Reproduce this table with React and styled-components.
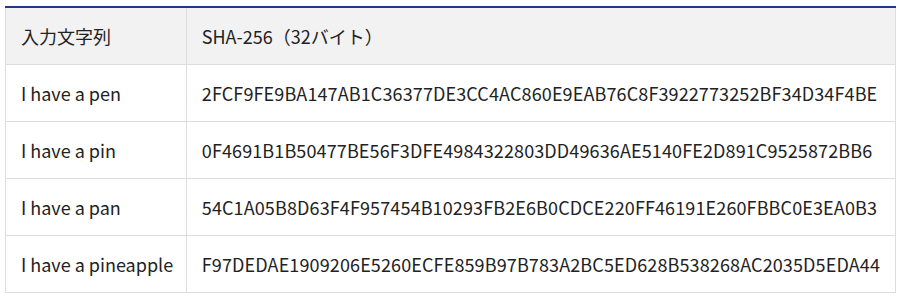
import styled, { createGlobalStyle } from "styled-components";

const GlobalStyle = createGlobalStyle`
  body {
    margin: 0;
    background: #ffffff;
    font-family: "Noto Sans CJK JP", "Noto Sans", sans-serif;
    color: #222222;
  }
`;

const rows = [
  ["I have a pen", "2FCF9FE9BA147AB1C36377DE3CC4AC860E9EAB76C8F3922773252BF34D34F4BE"],
  ["I have a pin", "0F4691B1B50477BE56F3DFE4984322803DD49636AE5140FE2D891C9525872BB6"],
  ["I have a pan", "54C1A05B8D63F4F957454B10293FB2E6B0CDCE220FF46191E260FBBC0E3EA0B3"],
  ["I have a pineapple", "F97DEDAE1909206E5260ECFE859B97B783A2BC5ED628B538268AC2035D5EDA44"],
];

const Wrapper = styled.div`
  padding: 6px 4px 0 5px;
`;

const Table = styled.table`
  width: 891px;
  border-collapse: collapse;
  border-top: 2px solid #1b3a8c;
  font-size: 18px;
  line-height: 24px;

  th,
  td {
    height: 56px;
    padding: 0 15px;
    border: 1px solid #dddddd;
    text-align: left;
    font-weight: 400;
    white-space: nowrap;
  }

  tr:first-child th {
    border-top: none;
  }

  th {
    background: #f2f2f2;
  }

  th:first-child,
  td:first-child {
    width: 153px;
    padding-right: 12px;
  }
`;

const HashCell = styled.td`
  letter-spacing: 0.12px;
`;

const App = () => {
  return (
    <Wrapper>
      <GlobalStyle />
      <Table>
        <thead>
          <tr>
            <th>入力文字列</th>
            <th>SHA-256（32バイト）</th>
          </tr>
        </thead>
        <tbody>
          {rows.map(([input, hash]) => (
            <tr key={input}>
              <td>{input}</td>
              <HashCell>{hash}</HashCell>
            </tr>
          ))}
        </tbody>
      </Table>
    </Wrapper>
  );
};

export default App;
